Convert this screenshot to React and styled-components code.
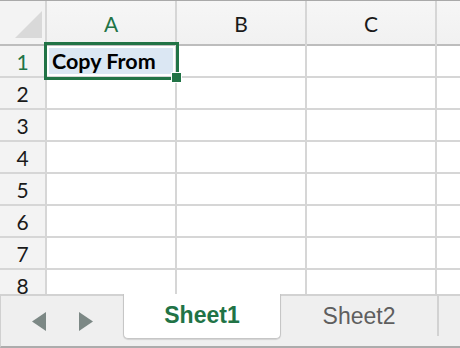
import React from "react";
import styled, { createGlobalStyle } from "styled-components";

const Global = createGlobalStyle`
  html, body { margin: 0; padding: 0; background: #fff; }
  body { width: 460px; height: 348px; overflow: hidden; }
`;

const Frame = styled.div`
  width: 460px;
  height: 348px;
  display: flex;
  flex-direction: column;
  overflow: hidden;
  font-family: Lato, "Open Sans", sans-serif;
  background: #fff;
`;

const Grid = styled.div`
  height: 294px;
  overflow: hidden;
  display: grid;
  grid-template-columns: 45px 128px 128px 128px 1fr;
  grid-template-rows: 43px repeat(8, 30px);
  column-gap: 2px;
  row-gap: 2px;
  background: #d6d6d6;
  border-top: 1px solid #a9a9a9;
  position: relative;
`;

const Corner = styled.div`
  background: #f3f3f3;
  position: relative;
  box-shadow: 0 2px 0 #bdbdbd;
  &::after {
    content: "";
    position: absolute;
    left: 15px;
    top: 10px;
    width: 27px;
    height: 27px;
    background: #d9d9d9;
    clip-path: polygon(100% 0, 100% 100%, 0 100%);
  }
`;

const ColHead = styled.div`
  background: linear-gradient(#f6f6f6, #f1f1f1);
  box-shadow: 0 2px 0 #bdbdbd;
  display: flex;
  align-items: center;
  justify-content: center;
  font-size: 21px;
  padding-top: 1px;
  color: ${(p) => (p.$active ? "#217346" : "#1a1a1a")};
`;

const RowHead = styled.div`
  background: #f3f3f3;
  display: flex;
  align-items: center;
  justify-content: center;
  font-size: 21px;
  padding-top: 1px;
  color: ${(p) => (p.$active ? "#217346" : "#1a1a1a")};
`;

const Cell = styled.div`
  background: #fff;
  position: relative;
  display: flex;
  align-items: center;
  padding-left: 5px;
  font-size: 21.5px;
  font-weight: 700;
  color: #000;
  white-space: nowrap;
  ${(p) =>
    p.$selected &&
    `
    z-index: 2;
    background: #dbe7f3;
    box-shadow: inset 0 0 0 2px #fff;
    &::before {
      content: "";
      position: absolute;
      left: -3px; top: -4px; right: -4px; bottom: -4px;
      border: 3px solid #217346;
      pointer-events: none;
    }
    &::after {
      content: "";
      position: absolute;
      right: -7px; bottom: -7px;
      width: 9px; height: 9px;
      background: #217346;
      border: 1px solid #fff;
    }
  `}
`;

const Label = styled.span`
  position: relative;
  z-index: 1;
`;

const TabBar = styled.div`
  height: 54px;
  box-sizing: border-box;
  background: #efefef;
  border-top: 2px solid #d2d2d2;
  border-bottom: 2px solid #acacac;
  border-left: 1px solid #d0d0d0;
  display: flex;
  align-items: stretch;
`;

const Nav = styled.div`
  width: 122px;
  display: flex;
  align-items: center;
  justify-content: flex-start;
  gap: 33px;
  padding-left: 31px;
  box-sizing: border-box;
`;

const Arrow = styled.svg`
  width: 14px;
  height: 19px;
  fill: #7c8885;
`;

const Tab = styled.div`
  width: ${(p) => p.$w}px;
  box-sizing: border-box;
  display: flex;
  align-items: center;
  justify-content: center;
  font-family: "Liberation Sans", Arial, sans-serif;
  font-size: 23px;
  ${(p) =>
    p.$active
      ? `
    background: #fff;
    color: #217346;
    font-weight: 700;
    margin-top: -2px;
    margin-bottom: 7px;
    border: 1px solid #c6c6c6;
    border-top: none;
    border-radius: 0 0 5px 5px;
    box-shadow: 0 1px 1px rgba(0,0,0,0.12);
    padding-bottom: 2px;
  `
      : `
    color: #5e5e5e;
    margin-bottom: 10px;
    border-right: 2px solid #d2d2d2;
    padding-top: 1px;
  `}
`;

const cols = ["A", "B", "C", ""];

export default function App() {
  const rows = [1, 2, 3, 4, 5, 6, 7, 8];
  return (
    <Frame>
      <Global />
      <Grid>
        <Corner />
        {cols.map((c, i) => (
          <ColHead key={i} $active={c === "A"}>
            {c}
          </ColHead>
        ))}
        {rows.map((r) => (
          <React.Fragment key={r}>
            <RowHead $active={r === 1}>{r}</RowHead>
            {cols.map((c, i) => (
              <Cell key={i} $selected={r === 1 && i === 0}>
                {r === 1 && i === 0 ? <Label>Copy From</Label> : null}
              </Cell>
            ))}
          </React.Fragment>
        ))}
      </Grid>
      <TabBar>
        <Nav>
          <Arrow viewBox="0 0 14 19">
            <polygon points="14,0 14,19 0,9.5" />
          </Arrow>
          <Arrow viewBox="0 0 14 19">
            <polygon points="0,0 0,19 14,9.5" />
          </Arrow>
        </Nav>
        <Tab $active $w={158}>Sheet1</Tab>
        <Tab $w={158}>Sheet2</Tab>
      </TabBar>
    </Frame>
  );
}
